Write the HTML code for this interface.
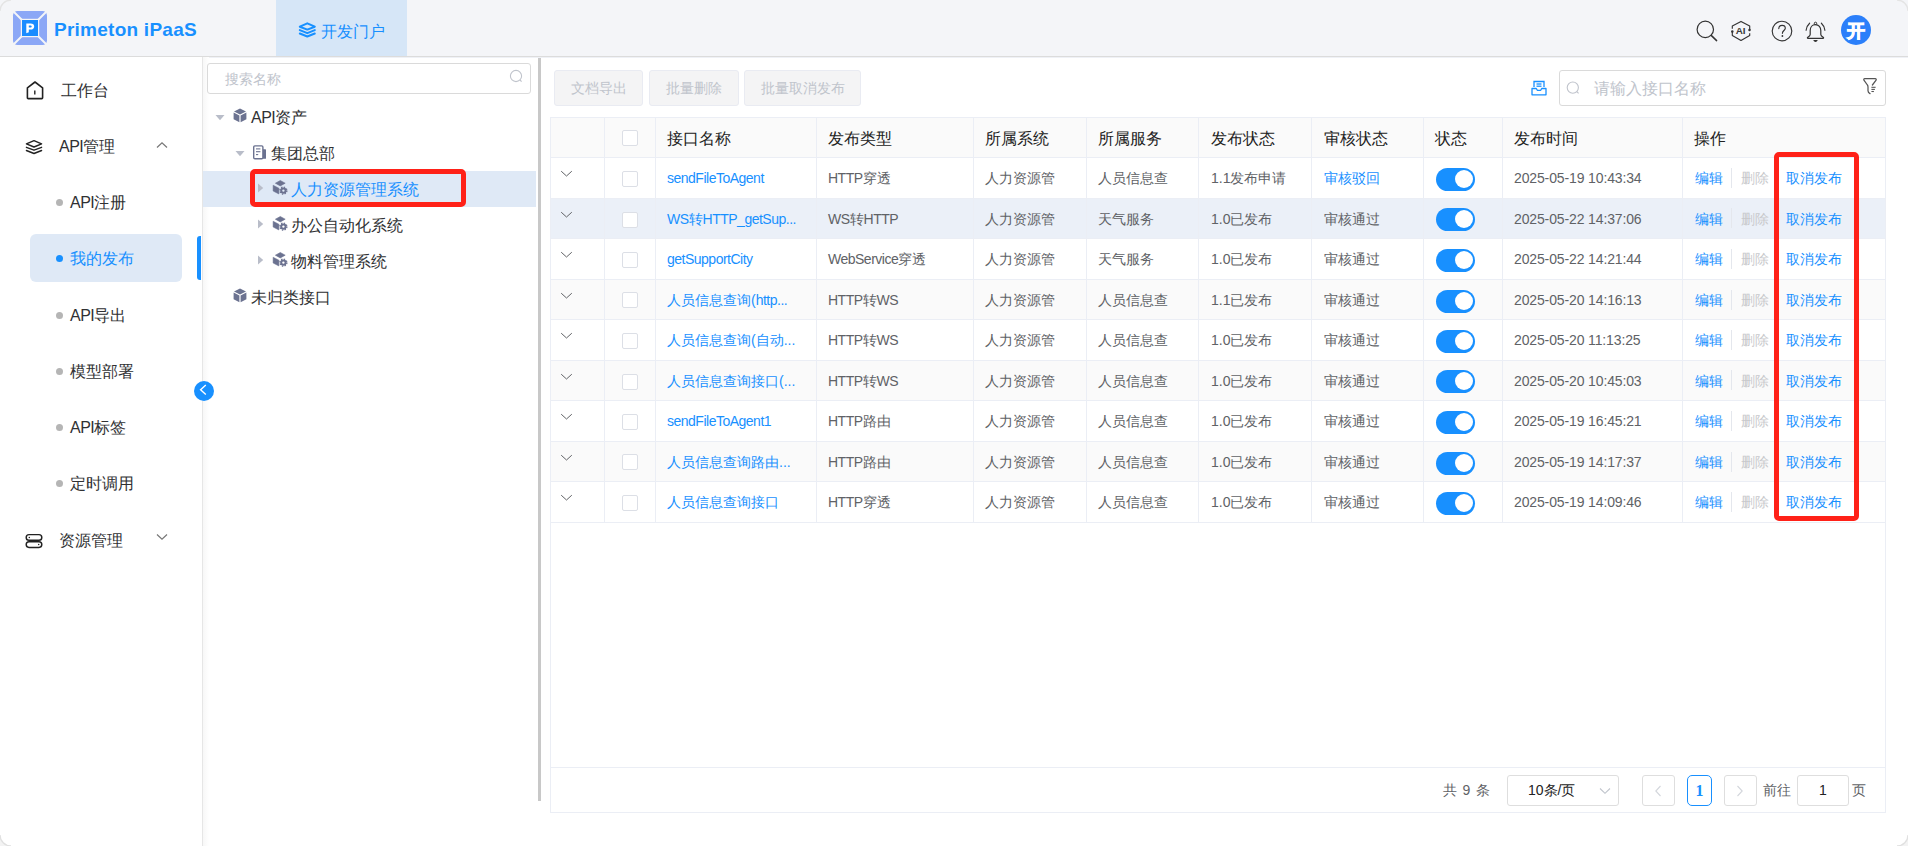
<!DOCTYPE html><html><head><meta charset="utf-8"><style>
*{box-sizing:border-box;margin:0;padding:0}
html,body{width:1908px;height:846px;overflow:hidden;background:#fff}
body{position:relative;font-family:"Liberation Sans",sans-serif;color:#303133;font-size:14px}
.a{position:absolute}
.t{position:absolute;white-space:nowrap}
svg{position:absolute;overflow:visible}
#hdr{left:0;top:0;width:1908px;height:57px;background:#f4f5f8;border-bottom:1px solid #dcdcdc}
#brand{left:54px;top:16.8px;font-size:19px;font-weight:bold;color:#1890ff;line-height:26px;letter-spacing:0.25px}
#tab{left:276px;top:0;width:131px;height:56px;background:#d6e6f7}
#tabtxt{left:321px;top:19.5px;font-size:16px;line-height:24px;color:#1890ff}
#avatar{left:1841px;top:15px;width:30px;height:30px;border-radius:50%;background:#2b7ffa;color:#fff;font-weight:bold;font-size:18px;line-height:32px;text-align:center;-webkit-text-stroke:0.9px #fff}
#side{left:0;top:57px;width:203px;height:789px;background:#fff;border-right:1px solid #e6e6e6}
#sideshadow{left:203px;top:57px;width:6px;height:789px;background:linear-gradient(to right,#f7f7f7,#fff)}
.mi{font-size:16px;line-height:24px;color:#303133}
.dot{width:7px;height:7px;border-radius:50%;background:#b5b5b5}
#sel{left:30px;top:234px;width:152px;height:48px;border-radius:6px;background:#dfe9f6}
#bar{left:197px;top:236px;width:4px;height:44px;background:#1890ff;border-radius:3px 0 0 3px}
#collapse{left:194px;top:381px;width:20px;height:20px;border-radius:50%;background:#1890ff}
.inp{border:1px solid #dadada;border-radius:3px;background:#fff}
.ph{color:#c0c4cc}
#divider{left:538px;top:58px;width:3px;height:743px;background:#c8c8c8}
.tn{font-size:16px;line-height:24px;color:#303133}
#treesel{left:203px;top:171px;width:333px;height:36px;background:#dfe9f6}
.redbox{border:5px solid #ff2118;border-radius:5px}
.btn{background:#f4f4f5;border:1px solid #e9ebf2;border-radius:3px;height:36px;top:70px}
.btnt{font-size:14px;line-height:35px;color:#c0c4cc;text-align:center;width:100%;top:0;left:0}
#tbl{left:550px;top:117px;width:1336px;height:696px;border:1px solid #ebeef5}
.hrow{background:#fafafa}
.hl{background:#ebeef5}
.vl{background:#ebeef5;width:1px}
.th{font-size:16px;line-height:24px;color:#222}
.td{font-size:14px;line-height:20px;color:#606266}
.lk{color:#1890ff}
.cb{width:16px;height:16px;border:1px solid #dcdfe6;border-radius:2px;background:#fff}
.sw{width:39px;height:23px;border-radius:12px;background:#1890ff}
.knob{width:18px;height:18px;border-radius:50%;background:#fff;left:19px;top:2px;position:absolute}
.pg{border:1px solid #dedede;border-radius:3px;background:#fff;top:775px;height:31px}
</style></head><body>
<div id="hdr" class="a"></div><div class="a" style="left:203px;top:57px;width:1705px;height:1px;background:#eff1f6"></div>
<svg style="left:13px;top:11px" width="34" height="34" viewBox="0 0 34 34">
<rect x="0" y="0" width="34" height="34" rx="4.5" fill="#8ba7f6"/>
<line x1="0" y1="0" x2="9" y2="9" stroke="#f4f5f7" stroke-width="2"/>
<line x1="34" y1="0" x2="25" y2="9" stroke="#f4f5f7" stroke-width="2"/>
<line x1="0" y1="34" x2="9" y2="25" stroke="#f4f5f7" stroke-width="2"/>
<line x1="34" y1="34" x2="25" y2="25" stroke="#f4f5f7" stroke-width="2"/>
<rect x="7.8" y="7.8" width="18.4" height="18.4" fill="#f4f5f7"/>
<rect x="9" y="9" width="16" height="16" fill="#1a8cff"/>
<path d="M13.3 22.2 V12.4 H17.6 C20 12.4 21.2 13.6 21.2 15.5 C21.2 17.5 19.8 18.6 17.6 18.6 H15.8 V21.2 Z M15.8 14.4 V16.6 H17.3 C18.2 16.6 18.7 16.2 18.7 15.5 C18.7 14.8 18.2 14.4 17.3 14.4 Z" fill="#fff"/>
</svg>
<div id="brand" class="t">Primeton iPaaS</div>
<div id="tab" class="a"></div>
<svg style="left:299px;top:22px" width="17" height="16" viewBox="0 0 17 16">
<path d="M8.3 1.3 L15.8 4.7 L8.3 7.6 L0.8 4.7 Z" fill="none" stroke="#1890ff" stroke-width="2" stroke-linejoin="round"/>
<path d="M0.8 8.1 L8.3 11.2 L15.8 8.1" fill="none" stroke="#1890ff" stroke-width="2" stroke-linejoin="round" stroke-linecap="round"/>
<path d="M0.8 11.5 L8.3 14.5 L15.8 11.5" fill="none" stroke="#1890ff" stroke-width="2" stroke-linejoin="round" stroke-linecap="round"/>
</svg>
<div id="tabtxt" class="t">开发门户</div>
<svg style="left:1694px;top:18px" width="26" height="26" viewBox="0 0 26 26">
<circle cx="11.3" cy="11.4" r="8.2" fill="none" stroke="#333" stroke-width="1.2"/>
<line x1="17.2" y1="17.4" x2="22.6" y2="22.6" stroke="#333" stroke-width="1.5" stroke-linecap="round"/>
</svg>
<svg style="left:1730px;top:20px" width="22" height="22" viewBox="0 0 22 22">
<path d="M2.3 8.7 V6 L11 1.4 L19.7 6 V9.9" fill="none" stroke="#333" stroke-width="1.15" stroke-linejoin="round"/>
<path d="M19.7 13.3 V15.6 L11 20.4 L2.3 15.6 V11.5" fill="none" stroke="#333" stroke-width="1.15" stroke-linejoin="round"/>
<circle cx="19.5" cy="9.9" r="1.25" fill="#333"/>
<circle cx="2.3" cy="11.5" r="1.25" fill="#333"/>
<text x="10.6" y="13.7" font-family="Liberation Sans" font-weight="bold" font-size="9.9" text-anchor="middle" fill="#3a3a3a">AI</text>
</svg>
<svg style="left:1771px;top:20px" width="22" height="22" viewBox="0 0 22 22">
<circle cx="11" cy="11" r="9.8" fill="none" stroke="#333" stroke-width="1.15"/>
<path d="M7.8 8.6 C7.8 6.6 9.2 5.3 11.1 5.3 C13 5.3 14.3 6.5 14.3 8.2 C14.3 10.4 11.4 10.7 11.4 13.3" fill="none" stroke="#333" stroke-width="1.15" stroke-linecap="round"/>
<circle cx="11.4" cy="16" r="0.9" fill="#333"/>
</svg>
<svg style="left:1805px;top:20px" width="22" height="24" viewBox="0 0 22 24">
<circle cx="10.5" cy="3.4" r="1.2" fill="none" stroke="#333" stroke-width="1"/>
<path d="M10.5 4.6 C7.2 4.6 5.2 7.3 5.2 10.6 V14.4 C5.2 15.6 4.2 16.4 2.8 17.2 C2.2 17.6 2.3 18.3 3 18.3 H18 C18.7 18.3 18.8 17.6 18.2 17.2 C16.8 16.4 15.8 15.6 15.8 14.4 V10.6 C15.8 7.3 13.8 4.6 10.5 4.6 Z" fill="none" stroke="#333" stroke-width="1.2"/>
<path d="M8.4 20.1 H12.6 C12.6 21.2 11.6 21.9 10.5 21.9 C9.4 21.9 8.4 21.2 8.4 20.1 Z" fill="#333"/>
<path d="M1.1 10.3 C1.4 7.6 2.6 5 4.6 3.2" fill="none" stroke="#333" stroke-width="1.15" stroke-linecap="round"/>
<path d="M19.9 10.3 C19.6 7.6 18.4 5 16.4 3.2" fill="none" stroke="#333" stroke-width="1.15" stroke-linecap="round"/>
</svg>
<div id="avatar" class="a">开</div>
<div id="side" class="a"></div><div id="sideshadow" class="a"></div>
<svg style="left:26px;top:81px" width="18" height="19" viewBox="0 0 18 19">
<path d="M9 1 L16.6 6.8 V16.8 C16.6 17.4 16.2 17.6 15.8 17.6 H2.2 C1.8 17.6 1.4 17.4 1.4 16.8 V6.8 Z" fill="none" stroke="#222" stroke-width="1.6" stroke-linejoin="round"/>
<line x1="8.8" y1="9.5" x2="8.8" y2="13.5" stroke="#222" stroke-width="1.4"/>
</svg>
<div class="t mi" style="left:61px;top:79px">工作台</div>
<svg style="left:25px;top:139px" width="18" height="16" viewBox="0 0 18 16">
<path d="M9 1.6 L16.6 4.8 L9 8 L1.4 4.8 Z" fill="none" stroke="#222" stroke-width="1.4" stroke-linejoin="round"/>
<path d="M1.4 8.3 L9 11.2 L16.6 8.3" fill="none" stroke="#222" stroke-width="1.4" stroke-linejoin="round" stroke-linecap="round"/>
<path d="M1.4 11.5 L9 14.5 L16.6 11.5" fill="none" stroke="#222" stroke-width="1.4" stroke-linejoin="round" stroke-linecap="round"/>
</svg>
<div class="t mi" style="left:59px;top:135px"><span style="letter-spacing:-0.5px">API</span>管理</div>
<svg style="left:156px;top:141px" width="12" height="8" viewBox="0 0 12 8"><path d="M1 6.5 L6 1.8 L11 6.5" fill="none" stroke="#777" stroke-width="1.2"/></svg>
<div id="sel" class="a"></div><div id="bar" class="a"></div>
<div class="a dot" style="left:56px;top:198.5px;"></div>
<div class="t mi" style="left:70px;top:191px;"><span style="letter-spacing:-0.5px">API</span>注册</div>
<div class="a dot" style="left:56px;top:254.5px;background:#1890ff"></div>
<div class="t mi" style="left:70px;top:247px;color:#1890ff">我的发布</div>
<div class="a dot" style="left:56px;top:311.5px;"></div>
<div class="t mi" style="left:70px;top:304px;"><span style="letter-spacing:-0.5px">API</span>导出</div>
<div class="a dot" style="left:56px;top:367.5px;"></div>
<div class="t mi" style="left:70px;top:360px;">模型部署</div>
<div class="a dot" style="left:56px;top:423.5px;"></div>
<div class="t mi" style="left:70px;top:416px;"><span style="letter-spacing:-0.5px">API</span>标签</div>
<div class="a dot" style="left:56px;top:479.5px;"></div>
<div class="t mi" style="left:70px;top:472px;">定时调用</div>
<svg style="left:25px;top:533px" width="18" height="16" viewBox="0 0 18 16">
<rect x="1.2" y="1.6" width="15.6" height="5.6" rx="2.8" fill="none" stroke="#222" stroke-width="1.45"/>
<rect x="1.2" y="8.8" width="15.6" height="5.6" rx="2.8" fill="none" stroke="#222" stroke-width="1.45"/>
<circle cx="4.3" cy="4.4" r="0.75" fill="#222"/><circle cx="13.7" cy="11.6" r="0.75" fill="#222"/>
</svg>
<div class="t mi" style="left:59px;top:529px">资源管理</div>
<svg style="left:156px;top:533px" width="12" height="8" viewBox="0 0 12 8"><path d="M1 1.5 L6 6.2 L11 1.5" fill="none" stroke="#777" stroke-width="1.2"/></svg>
<div id="collapse" class="a"></div><svg style="left:194px;top:381px" width="20" height="20" viewBox="0 0 20 20"><path d="M11.8 3.9 L6.6 8.7 L11.8 13.5" fill="none" stroke="#fff" stroke-width="1.4"/></svg>
<div class="a inp" style="left:207px;top:63px;width:324px;height:31px"></div>
<div class="t ph" style="left:225px;top:68.5px;font-size:14px;line-height:20px">搜索名称</div>
<svg style="left:509px;top:69px" width="14" height="14" viewBox="0 0 14 14"><circle cx="7" cy="7" r="5.6" fill="none" stroke="#c0c4cc" stroke-width="1.1"/><line x1="11" y1="11" x2="12.6" y2="12.6" stroke="#c0c4cc" stroke-width="1.1"/></svg>
<div id="treesel" class="a"></div>
<svg style="left:215px;top:114px" width="10" height="7" viewBox="0 0 10 7"><path d="M0.5 1 H9.5 L5 6.2 Z" fill="#b9bdc9"/></svg>
<svg style="left:233px;top:108px" width="14" height="15" viewBox="0 0 14 15">
<path d="M7 0.6 L13 3.6 L7 6.6 L1 3.6 Z" fill="#6b7290"/>
<path d="M0.6 4.6 L6.4 7.5 V14.2 L0.6 11.3 Z" fill="#6b7290"/>
<path d="M13.4 4.6 L7.6 7.5 V14.2 L13.4 11.3 Z" fill="#6b7290"/>
</svg>
<div class="t tn" style="left:251px;top:106px"><span style="letter-spacing:-0.5px">API</span>资产</div>
<svg style="left:235px;top:150px" width="10" height="7" viewBox="0 0 10 7"><path d="M0.5 1 H9.5 L5 6.2 Z" fill="#b9bdc9"/></svg>
<svg style="left:252px;top:145px" width="15" height="15" viewBox="0 0 15 15">
<rect x="1.7" y="0.9" width="9.2" height="12.9" rx="1.2" fill="none" stroke="#6b7290" stroke-width="1.4"/>
<path d="M10.9 4.2 H13.4 C13.8 4.2 14 4.4 14 4.8 V13.2 C14 13.6 13.8 13.8 13.4 13.8 H10.9 Z" fill="#6b7290"/>
<line x1="4" y1="3.9" x2="8.4" y2="3.9" stroke="#6b7290" stroke-width="1.1"/>
<line x1="4" y1="6.7" x2="8.4" y2="6.7" stroke="#6b7290" stroke-width="1.1"/>
<line x1="4" y1="9.6" x2="6.2" y2="9.6" stroke="#6b7290" stroke-width="1.1"/>
</svg>
<div class="t tn" style="left:271px;top:142px">集团总部</div>
<svg style="left:257px;top:183px" width="7" height="10" viewBox="0 0 7 10"><path d="M1 0.5 V9.5 L6.2 5 Z" fill="#b9bdc9"/></svg>
<svg style="left:272px;top:180px" width="16" height="16" viewBox="0 0 16 16">
<path d="M3.4 3.2 L8.3 0.5 L13.2 3.2 L8.3 5.9 Z" fill="#6b7290" stroke="#6b7290" stroke-width="0.6" stroke-linejoin="round"/>
<path d="M1.1 5.2 L6.9 8.2 V14 L1.1 11 Z" fill="#6b7290" stroke="#6b7290" stroke-width="0.5" stroke-linejoin="round"/>
<circle cx="11.4" cy="10.6" r="2.2" fill="none" stroke="#6b7290" stroke-width="2"/>
<circle cx="11.4" cy="10.6" r="3.5" fill="none" stroke="#6b7290" stroke-width="1.3" stroke-dasharray="1.35 1.4"/>
</svg>
<div class="t tn" style="left:291px;top:178px;color:#1890ff">人力资源管理系统</div>
<svg style="left:257px;top:219px" width="7" height="10" viewBox="0 0 7 10"><path d="M1 0.5 V9.5 L6.2 5 Z" fill="#b9bdc9"/></svg>
<svg style="left:272px;top:216px" width="16" height="16" viewBox="0 0 16 16">
<path d="M3.4 3.2 L8.3 0.5 L13.2 3.2 L8.3 5.9 Z" fill="#6b7290" stroke="#6b7290" stroke-width="0.6" stroke-linejoin="round"/>
<path d="M1.1 5.2 L6.9 8.2 V14 L1.1 11 Z" fill="#6b7290" stroke="#6b7290" stroke-width="0.5" stroke-linejoin="round"/>
<circle cx="11.4" cy="10.6" r="2.2" fill="none" stroke="#6b7290" stroke-width="2"/>
<circle cx="11.4" cy="10.6" r="3.5" fill="none" stroke="#6b7290" stroke-width="1.3" stroke-dasharray="1.35 1.4"/>
</svg>
<div class="t tn" style="left:291px;top:214px;">办公自动化系统</div>
<svg style="left:257px;top:255px" width="7" height="10" viewBox="0 0 7 10"><path d="M1 0.5 V9.5 L6.2 5 Z" fill="#b9bdc9"/></svg>
<svg style="left:272px;top:252px" width="16" height="16" viewBox="0 0 16 16">
<path d="M3.4 3.2 L8.3 0.5 L13.2 3.2 L8.3 5.9 Z" fill="#6b7290" stroke="#6b7290" stroke-width="0.6" stroke-linejoin="round"/>
<path d="M1.1 5.2 L6.9 8.2 V14 L1.1 11 Z" fill="#6b7290" stroke="#6b7290" stroke-width="0.5" stroke-linejoin="round"/>
<circle cx="11.4" cy="10.6" r="2.2" fill="none" stroke="#6b7290" stroke-width="2"/>
<circle cx="11.4" cy="10.6" r="3.5" fill="none" stroke="#6b7290" stroke-width="1.3" stroke-dasharray="1.35 1.4"/>
</svg>
<div class="t tn" style="left:291px;top:250px;">物料管理系统</div>
<svg style="left:233px;top:288px" width="14" height="15" viewBox="0 0 14 15">
<path d="M7 0.6 L13 3.6 L7 6.6 L1 3.6 Z" fill="#6b7290"/>
<path d="M0.6 4.6 L6.4 7.5 V14.2 L0.6 11.3 Z" fill="#6b7290"/>
<path d="M13.4 4.6 L7.6 7.5 V14.2 L13.4 11.3 Z" fill="#6b7290"/>
</svg>
<div class="t tn" style="left:251px;top:286px">未归类接口</div>
<div class="a redbox" style="left:250px;top:169px;width:216px;height:38px"></div>
<div id="divider" class="a"></div>
<div class="a btn" style="left:554px;width:89px"><div class="t btnt">文档导出</div></div>
<div class="a btn" style="left:649px;width:90px"><div class="t btnt">批量删除</div></div>
<div class="a btn" style="left:744px;width:117px"><div class="t btnt">批量取消发布</div></div>
<svg style="left:1531px;top:80px" width="16" height="16" viewBox="0 0 16 16">
<path d="M3 7 V1.5 H13 V7" fill="none" stroke="#1890ff" stroke-width="1.3"/>
<line x1="5.5" y1="4" x2="10.5" y2="4" stroke="#1890ff" stroke-width="1.3"/>
<line x1="5.5" y1="6.2" x2="10.5" y2="6.2" stroke="#1890ff" stroke-width="1.3"/>
<path d="M1 8.5 H5.3 L6.3 10.3 H9.7 L10.7 8.5 H15 V14.8 H1 Z" fill="none" stroke="#1890ff" stroke-width="1.3" stroke-linejoin="round"/>
</svg>
<div class="a inp" style="left:1559px;top:70px;width:327px;height:36px"></div>
<svg style="left:1566px;top:81px" width="14" height="14" viewBox="0 0 14 14"><circle cx="6.8" cy="6.6" r="5.6" fill="none" stroke="#c0c4cc" stroke-width="1.1"/><line x1="10.8" y1="10.6" x2="12.6" y2="12.4" stroke="#c0c4cc" stroke-width="1.1"/></svg>
<div class="t ph" style="left:1594px;top:77px;font-size:16px;line-height:24px">请输入接口名称</div>
<svg style="left:1862px;top:77px" width="16" height="18" viewBox="0 0 16 18">
<path d="M10.4 8 L13.9 3.4 C14.6 2.5 14.2 1.7 13.2 1.7 H2.8 C1.8 1.7 1.4 2.5 2.1 3.4 L5.4 8 C5.9 8.6 6 9.1 6 9.9 V13.8 C6 15 6.8 16 8 16.6" fill="none" stroke="#555" stroke-width="1.25" stroke-linecap="round" stroke-linejoin="round"/>
<line x1="9.4" y1="10.3" x2="13.6" y2="10.3" stroke="#555" stroke-width="1.1"/>
<line x1="9.4" y1="12.4" x2="12.9" y2="12.4" stroke="#555" stroke-width="1.1"/>
<line x1="9.4" y1="14.5" x2="11.9" y2="14.5" stroke="#555" stroke-width="1.1"/>
</svg>
<div class="a" style="left:550px;top:117px;width:1336px;height:696px;border:1px solid #ebeef5"></div>
<div class="a hrow" style="left:551px;top:118px;width:1334px;height:39px"></div>
<div class="a" style="left:551px;top:199px;width:1334px;height:39px;background:#ebf0f8"></div>
<div class="a" style="left:551px;top:280px;width:1334px;height:39px;background:#fafafa"></div>
<div class="a" style="left:551px;top:361px;width:1334px;height:39px;background:#fafafa"></div>
<div class="a" style="left:551px;top:442px;width:1334px;height:39px;background:#fafafa"></div>
<div class="a hl" style="left:551px;top:157px;width:1334px;height:1px"></div>
<div class="a hl" style="left:551px;top:198px;width:1334px;height:1px"></div>
<div class="a hl" style="left:551px;top:238px;width:1334px;height:1px"></div>
<div class="a hl" style="left:551px;top:279px;width:1334px;height:1px"></div>
<div class="a hl" style="left:551px;top:319px;width:1334px;height:1px"></div>
<div class="a hl" style="left:551px;top:360px;width:1334px;height:1px"></div>
<div class="a hl" style="left:551px;top:400px;width:1334px;height:1px"></div>
<div class="a hl" style="left:551px;top:441px;width:1334px;height:1px"></div>
<div class="a hl" style="left:551px;top:481px;width:1334px;height:1px"></div>
<div class="a hl" style="left:551px;top:522px;width:1334px;height:1px"></div>
<div class="a vl" style="left:604px;top:118px;height:404px"></div>
<div class="a vl" style="left:655px;top:118px;height:404px"></div>
<div class="a vl" style="left:816px;top:118px;height:404px"></div>
<div class="a vl" style="left:973px;top:118px;height:404px"></div>
<div class="a vl" style="left:1086px;top:118px;height:404px"></div>
<div class="a vl" style="left:1198px;top:118px;height:404px"></div>
<div class="a vl" style="left:1311px;top:118px;height:404px"></div>
<div class="a vl" style="left:1423px;top:118px;height:404px"></div>
<div class="a vl" style="left:1502px;top:118px;height:404px"></div>
<div class="a vl" style="left:1682px;top:118px;height:404px"></div>
<div class="t th" style="left:667px;top:127px">接口名称</div>
<div class="t th" style="left:828px;top:127px">发布类型</div>
<div class="t th" style="left:985px;top:127px">所属系统</div>
<div class="t th" style="left:1098px;top:127px">所属服务</div>
<div class="t th" style="left:1211px;top:127px">发布状态</div>
<div class="t th" style="left:1324px;top:127px">审核状态</div>
<div class="t th" style="left:1435px;top:127px">状态</div>
<div class="t th" style="left:1514px;top:127px">发布时间</div>
<div class="t th" style="left:1694px;top:127px">操作</div>
<div class="a cb" style="left:622px;top:130px"></div>
<svg style="left:560px;top:170px" width="13" height="8" viewBox="0 0 13 8"><path d="M1.2 1.2 L6.5 6 L11.8 1.2" fill="none" stroke="#606266" stroke-width="1"/></svg>
<div class="a cb" style="left:622px;top:171px"></div>
<div class="t td lk" style="left:667px;top:168.0px"><span style="letter-spacing:-0.5px">sendFileToAgent</span></div>
<div class="t td" style="left:828px;top:168.0px"><span style="letter-spacing:-0.5px">HTTP</span>穿透</div>
<div class="t td" style="left:985px;top:168.0px">人力资源管</div>
<div class="t td" style="left:1098px;top:168.0px">人员信息查</div>
<div class="t td" style="left:1211px;top:168.0px">1.1发布申请</div>
<div class="t td lk" style="left:1324px;top:168.0px">审核驳回</div>
<div class="a sw" style="left:1436px;top:168px"><div class="knob"></div></div>
<div class="t td" style="left:1514px;top:168.0px"><span style="letter-spacing:-0.13px">2025-05-19 10:43:34</span></div>
<div class="t td lk" style="left:1695px;top:168.0px">编辑</div>
<div class="a" style="left:1731px;top:168px;width:1px;height:20px;background:#e4e7ed"></div>
<div class="t td" style="left:1741px;top:168.0px;color:#c8c9cc">删除</div>
<div class="t td lk" style="left:1786px;top:168.0px">取消发布</div>
<svg style="left:560px;top:211px" width="13" height="8" viewBox="0 0 13 8"><path d="M1.2 1.2 L6.5 6 L11.8 1.2" fill="none" stroke="#606266" stroke-width="1"/></svg>
<div class="a cb" style="left:622px;top:212px"></div>
<div class="t td lk" style="left:667px;top:208.5px"><span style="letter-spacing:-0.5px">WS</span>转<span style="letter-spacing:-0.5px">HTTP_getSup...</span></div>
<div class="t td" style="left:828px;top:208.5px"><span style="letter-spacing:-0.5px">WS</span>转<span style="letter-spacing:-0.5px">HTTP</span></div>
<div class="t td" style="left:985px;top:208.5px">人力资源管</div>
<div class="t td" style="left:1098px;top:208.5px">天气服务</div>
<div class="t td" style="left:1211px;top:208.5px">1.0已发布</div>
<div class="t td " style="left:1324px;top:208.5px">审核通过</div>
<div class="a sw" style="left:1436px;top:208px"><div class="knob"></div></div>
<div class="t td" style="left:1514px;top:208.5px"><span style="letter-spacing:-0.13px">2025-05-22 14:37:06</span></div>
<div class="t td lk" style="left:1695px;top:208.5px">编辑</div>
<div class="a" style="left:1731px;top:208px;width:1px;height:20px;background:#e4e7ed"></div>
<div class="t td" style="left:1741px;top:208.5px;color:#c8c9cc">删除</div>
<div class="t td lk" style="left:1786px;top:208.5px">取消发布</div>
<svg style="left:560px;top:251px" width="13" height="8" viewBox="0 0 13 8"><path d="M1.2 1.2 L6.5 6 L11.8 1.2" fill="none" stroke="#606266" stroke-width="1"/></svg>
<div class="a cb" style="left:622px;top:252px"></div>
<div class="t td lk" style="left:667px;top:249.0px"><span style="letter-spacing:-0.5px">getSupportCity</span></div>
<div class="t td" style="left:828px;top:249.0px"><span style="letter-spacing:-0.5px">WebService</span>穿透</div>
<div class="t td" style="left:985px;top:249.0px">人力资源管</div>
<div class="t td" style="left:1098px;top:249.0px">天气服务</div>
<div class="t td" style="left:1211px;top:249.0px">1.0已发布</div>
<div class="t td " style="left:1324px;top:249.0px">审核通过</div>
<div class="a sw" style="left:1436px;top:249px"><div class="knob"></div></div>
<div class="t td" style="left:1514px;top:249.0px"><span style="letter-spacing:-0.13px">2025-05-22 14:21:44</span></div>
<div class="t td lk" style="left:1695px;top:249.0px">编辑</div>
<div class="a" style="left:1731px;top:249px;width:1px;height:20px;background:#e4e7ed"></div>
<div class="t td" style="left:1741px;top:249.0px;color:#c8c9cc">删除</div>
<div class="t td lk" style="left:1786px;top:249.0px">取消发布</div>
<svg style="left:560px;top:292px" width="13" height="8" viewBox="0 0 13 8"><path d="M1.2 1.2 L6.5 6 L11.8 1.2" fill="none" stroke="#606266" stroke-width="1"/></svg>
<div class="a cb" style="left:622px;top:292px"></div>
<div class="t td lk" style="left:667px;top:289.5px">人员信息查询(<span style="letter-spacing:-0.5px">http...</span></div>
<div class="t td" style="left:828px;top:289.5px"><span style="letter-spacing:-0.5px">HTTP</span>转<span style="letter-spacing:-0.5px">WS</span></div>
<div class="t td" style="left:985px;top:289.5px">人力资源管</div>
<div class="t td" style="left:1098px;top:289.5px">人员信息查</div>
<div class="t td" style="left:1211px;top:289.5px">1.1已发布</div>
<div class="t td " style="left:1324px;top:289.5px">审核通过</div>
<div class="a sw" style="left:1436px;top:290px"><div class="knob"></div></div>
<div class="t td" style="left:1514px;top:289.5px"><span style="letter-spacing:-0.13px">2025-05-20 14:16:13</span></div>
<div class="t td lk" style="left:1695px;top:289.5px">编辑</div>
<div class="a" style="left:1731px;top:290px;width:1px;height:20px;background:#e4e7ed"></div>
<div class="t td" style="left:1741px;top:289.5px;color:#c8c9cc">删除</div>
<div class="t td lk" style="left:1786px;top:289.5px">取消发布</div>
<svg style="left:560px;top:332px" width="13" height="8" viewBox="0 0 13 8"><path d="M1.2 1.2 L6.5 6 L11.8 1.2" fill="none" stroke="#606266" stroke-width="1"/></svg>
<div class="a cb" style="left:622px;top:333px"></div>
<div class="t td lk" style="left:667px;top:330.0px">人员信息查询(自动...</div>
<div class="t td" style="left:828px;top:330.0px"><span style="letter-spacing:-0.5px">HTTP</span>转<span style="letter-spacing:-0.5px">WS</span></div>
<div class="t td" style="left:985px;top:330.0px">人力资源管</div>
<div class="t td" style="left:1098px;top:330.0px">人员信息查</div>
<div class="t td" style="left:1211px;top:330.0px">1.0已发布</div>
<div class="t td " style="left:1324px;top:330.0px">审核通过</div>
<div class="a sw" style="left:1436px;top:330px"><div class="knob"></div></div>
<div class="t td" style="left:1514px;top:330.0px"><span style="letter-spacing:-0.13px">2025-05-20 11:13:25</span></div>
<div class="t td lk" style="left:1695px;top:330.0px">编辑</div>
<div class="a" style="left:1731px;top:330px;width:1px;height:20px;background:#e4e7ed"></div>
<div class="t td" style="left:1741px;top:330.0px;color:#c8c9cc">删除</div>
<div class="t td lk" style="left:1786px;top:330.0px">取消发布</div>
<svg style="left:560px;top:373px" width="13" height="8" viewBox="0 0 13 8"><path d="M1.2 1.2 L6.5 6 L11.8 1.2" fill="none" stroke="#606266" stroke-width="1"/></svg>
<div class="a cb" style="left:622px;top:374px"></div>
<div class="t td lk" style="left:667px;top:370.5px">人员信息查询接口(...</div>
<div class="t td" style="left:828px;top:370.5px"><span style="letter-spacing:-0.5px">HTTP</span>转<span style="letter-spacing:-0.5px">WS</span></div>
<div class="t td" style="left:985px;top:370.5px">人力资源管</div>
<div class="t td" style="left:1098px;top:370.5px">人员信息查</div>
<div class="t td" style="left:1211px;top:370.5px">1.0已发布</div>
<div class="t td " style="left:1324px;top:370.5px">审核通过</div>
<div class="a sw" style="left:1436px;top:370px"><div class="knob"></div></div>
<div class="t td" style="left:1514px;top:370.5px"><span style="letter-spacing:-0.13px">2025-05-20 10:45:03</span></div>
<div class="t td lk" style="left:1695px;top:370.5px">编辑</div>
<div class="a" style="left:1731px;top:370px;width:1px;height:20px;background:#e4e7ed"></div>
<div class="t td" style="left:1741px;top:370.5px;color:#c8c9cc">删除</div>
<div class="t td lk" style="left:1786px;top:370.5px">取消发布</div>
<svg style="left:560px;top:413px" width="13" height="8" viewBox="0 0 13 8"><path d="M1.2 1.2 L6.5 6 L11.8 1.2" fill="none" stroke="#606266" stroke-width="1"/></svg>
<div class="a cb" style="left:622px;top:414px"></div>
<div class="t td lk" style="left:667px;top:411.0px"><span style="letter-spacing:-0.5px">sendFileToAgent</span>1</div>
<div class="t td" style="left:828px;top:411.0px"><span style="letter-spacing:-0.5px">HTTP</span>路由</div>
<div class="t td" style="left:985px;top:411.0px">人力资源管</div>
<div class="t td" style="left:1098px;top:411.0px">人员信息查</div>
<div class="t td" style="left:1211px;top:411.0px">1.0已发布</div>
<div class="t td " style="left:1324px;top:411.0px">审核通过</div>
<div class="a sw" style="left:1436px;top:411px"><div class="knob"></div></div>
<div class="t td" style="left:1514px;top:411.0px"><span style="letter-spacing:-0.13px">2025-05-19 16:45:21</span></div>
<div class="t td lk" style="left:1695px;top:411.0px">编辑</div>
<div class="a" style="left:1731px;top:411px;width:1px;height:20px;background:#e4e7ed"></div>
<div class="t td" style="left:1741px;top:411.0px;color:#c8c9cc">删除</div>
<div class="t td lk" style="left:1786px;top:411.0px">取消发布</div>
<svg style="left:560px;top:454px" width="13" height="8" viewBox="0 0 13 8"><path d="M1.2 1.2 L6.5 6 L11.8 1.2" fill="none" stroke="#606266" stroke-width="1"/></svg>
<div class="a cb" style="left:622px;top:454px"></div>
<div class="t td lk" style="left:667px;top:451.5px">人员信息查询路由...</div>
<div class="t td" style="left:828px;top:451.5px"><span style="letter-spacing:-0.5px">HTTP</span>路由</div>
<div class="t td" style="left:985px;top:451.5px">人力资源管</div>
<div class="t td" style="left:1098px;top:451.5px">人员信息查</div>
<div class="t td" style="left:1211px;top:451.5px">1.0已发布</div>
<div class="t td " style="left:1324px;top:451.5px">审核通过</div>
<div class="a sw" style="left:1436px;top:452px"><div class="knob"></div></div>
<div class="t td" style="left:1514px;top:451.5px"><span style="letter-spacing:-0.13px">2025-05-19 14:17:37</span></div>
<div class="t td lk" style="left:1695px;top:451.5px">编辑</div>
<div class="a" style="left:1731px;top:452px;width:1px;height:20px;background:#e4e7ed"></div>
<div class="t td" style="left:1741px;top:451.5px;color:#c8c9cc">删除</div>
<div class="t td lk" style="left:1786px;top:451.5px">取消发布</div>
<svg style="left:560px;top:494px" width="13" height="8" viewBox="0 0 13 8"><path d="M1.2 1.2 L6.5 6 L11.8 1.2" fill="none" stroke="#606266" stroke-width="1"/></svg>
<div class="a cb" style="left:622px;top:495px"></div>
<div class="t td lk" style="left:667px;top:492.0px">人员信息查询接口</div>
<div class="t td" style="left:828px;top:492.0px"><span style="letter-spacing:-0.5px">HTTP</span>穿透</div>
<div class="t td" style="left:985px;top:492.0px">人力资源管</div>
<div class="t td" style="left:1098px;top:492.0px">人员信息查</div>
<div class="t td" style="left:1211px;top:492.0px">1.0已发布</div>
<div class="t td " style="left:1324px;top:492.0px">审核通过</div>
<div class="a sw" style="left:1436px;top:492px"><div class="knob"></div></div>
<div class="t td" style="left:1514px;top:492.0px"><span style="letter-spacing:-0.13px">2025-05-19 14:09:46</span></div>
<div class="t td lk" style="left:1695px;top:492.0px">编辑</div>
<div class="a" style="left:1731px;top:492px;width:1px;height:20px;background:#e4e7ed"></div>
<div class="t td" style="left:1741px;top:492.0px;color:#c8c9cc">删除</div>
<div class="t td lk" style="left:1786px;top:492.0px">取消发布</div>
<div class="a redbox" style="left:1774px;top:152px;width:85px;height:369px"></div>
<div class="a hl" style="left:551px;top:767px;width:1334px;height:1px"></div>
<div class="t td" style="left:1443px;top:780px;word-spacing:1.5px">共 9 条</div>
<div class="a pg" style="left:1507px;width:112px"></div>
<div class="t td" style="left:1528px;top:780px;color:#222">10条/页</div>
<svg style="left:1599px;top:787px" width="12" height="8" viewBox="0 0 12 8"><path d="M1 1.5 L6 6.3 L11 1.5" fill="none" stroke="#c0c4cc" stroke-width="1.1"/></svg>
<div class="a pg" style="left:1642px;width:33px"></div>
<svg style="left:1654px;top:785px" width="8" height="12" viewBox="0 0 8 12"><path d="M6.5 1 L1.8 6 L6.5 11" fill="none" stroke="#d3d6dc" stroke-width="1.1"/></svg>
<div class="a" style="left:1687px;top:775px;width:25px;height:31px;border:1.5px solid #1890ff;border-radius:5px"></div>
<div class="t td" style="left:1687px;top:780.5px;width:25px;text-align:center;color:#1890ff;font-weight:bold;font-family:'Liberation Serif',serif;font-size:16px">1</div>
<div class="a pg" style="left:1724px;width:33px"></div>
<svg style="left:1736px;top:785px" width="8" height="12" viewBox="0 0 8 12"><path d="M1.5 1 L6.2 6 L1.5 11" fill="none" stroke="#d3d6dc" stroke-width="1.1"/></svg>
<div class="t td" style="left:1763px;top:780px">前往</div>
<div class="a pg" style="left:1797px;width:52px"></div>
<div class="t td" style="left:1797px;top:780px;width:52px;text-align:center;color:#222">1</div>
<div class="t td" style="left:1852px;top:780px">页</div>
<svg style="left:0;top:0" width="1908" height="846" viewBox="0 0 1908 846">
<path d="M0 11 A11 11 0 0 1 11 0" fill="none" stroke="#e4e4e4" stroke-width="1.3"/>
<path d="M1897 0 A11 11 0 0 1 1908 11" fill="none" stroke="#e4e4e4" stroke-width="1.3"/>
<path d="M0 835 A11 11 0 0 0 11 846 L0 846 Z" fill="#f3f3f3"/>
<path d="M0 835 A11 11 0 0 0 11 846" fill="none" stroke="#e0e0e0" stroke-width="1.3"/>
<path d="M1908 835 A11 11 0 0 1 1897 846 L1908 846 Z" fill="#f3f3f3"/>
<path d="M1908 835 A11 11 0 0 1 1897 846" fill="none" stroke="#e0e0e0" stroke-width="1.3"/>
</svg>
</body></html>
